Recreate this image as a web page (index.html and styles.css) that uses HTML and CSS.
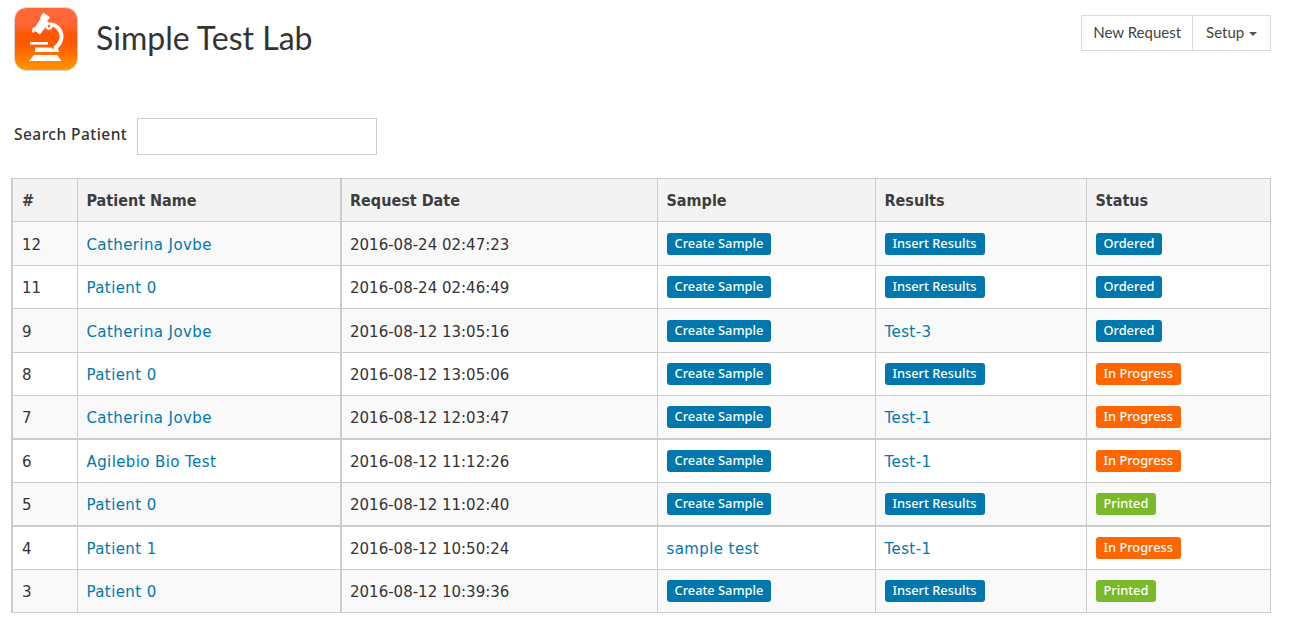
FILE: index.html
```html
<!DOCTYPE html>
<html lang="en">
<head>
<meta charset="utf-8">
<title>Simple Test Lab</title>
<link rel="stylesheet" href="styles.css">
</head>
<body>
<header class="top">
  <div class="brand">
    <svg class="logo" viewBox="0 0 64 64" width="64" height="64" aria-hidden="true">
      <defs>
        <linearGradient id="lg" x1="0" y1="0" x2="0" y2="1">
          <stop offset="0" stop-color="#ff6a3a"/>
          <stop offset="0.3" stop-color="#ff6430"/>
          <stop offset="0.42" stop-color="#ff5500"/>
          <stop offset="0.6" stop-color="#ff5a00"/>
          <stop offset="1" stop-color="#ff9800"/>
        </linearGradient>
      </defs>
      <rect x="0.5" y="0.5" width="63" height="63" rx="12" fill="url(#lg)" stroke="#e0d8d0"/>
      <g fill="#fff">
        <path d="M29 5.5 L36 10 L33 14.5 L35 15.5 L26 27.5 L21 24 L19.5 26 L18 25 L18.5 21 L21 20 L26.5 12 L26 11 Z"/>
        <path fill-rule="evenodd" d="M35 15.5 A3.6 3.6 0 1 1 35 22.7 A3.6 3.6 0 1 1 35 15.5 Z M35 17.8 A1.3 1.3 0 1 0 35 20.4 A1.3 1.3 0 1 0 35 17.8 Z"/>
        <path d="M37 15.5 C44 16 49.5 22 49.5 29.5 C49.5 35 46.5 40 41 43.5 L39.5 39.5 C43 37 45.5 33.5 45.5 29.5 C45.5 24.5 42 20.5 38 19.5 Z"/>
        <rect x="16" y="35" width="18" height="2.6"/>
        <path fill-rule="evenodd" d="M21 40.5 L38 40.5 L39 43 A3 3 0 0 1 44 41 L45 45 L21 45 Z"/>
        <path d="M20 48 L43 48 L47.5 54 L15 54 Z"/>
      </g>
    </svg>
    <h1 class="title">Simple Test Lab</h1>
  </div>
  <nav class="actions">
    <a class="act" href="#">New Request</a>
    <a class="act" href="#">Setup <span class="caret"></span></a>
  </nav>
</header>

<form class="search">
  <label class="search-label" for="q">Search Patient</label>
  <input class="search-input" id="q" type="text">
</form>

<table class="grid">
  <colgroup>
    <col class="c1"><col class="c2"><col class="c3"><col class="c4"><col class="c5"><col class="c6">
  </colgroup>
  <thead>
    <tr><th>#</th><th>Patient Name</th><th>Request Date</th><th>Sample</th><th>Results</th><th>Status</th></tr>
  </thead>
  <tbody>
    <tr><td>12</td><td><a href="#">Catherina Jovbe</a></td><td>2016-08-24 02:47:23</td><td><a class="tag blue" href="#">Create Sample</a></td><td><a class="tag blue" href="#">Insert Results</a></td><td><span class="tag blue">Ordered</span></td></tr>
    <tr><td>11</td><td><a href="#">Patient 0</a></td><td>2016-08-24 02:46:49</td><td><a class="tag blue" href="#">Create Sample</a></td><td><a class="tag blue" href="#">Insert Results</a></td><td><span class="tag blue">Ordered</span></td></tr>
    <tr><td>9</td><td><a href="#">Catherina Jovbe</a></td><td>2016-08-12 13:05:16</td><td><a class="tag blue" href="#">Create Sample</a></td><td><a href="#">Test-3</a></td><td><span class="tag blue">Ordered</span></td></tr>
    <tr><td>8</td><td><a href="#">Patient 0</a></td><td>2016-08-12 13:05:06</td><td><a class="tag blue" href="#">Create Sample</a></td><td><a class="tag blue" href="#">Insert Results</a></td><td><span class="tag orange">In Progress</span></td></tr>
    <tr class="before-thick"><td>7</td><td><a href="#">Catherina Jovbe</a></td><td>2016-08-12 12:03:47</td><td><a class="tag blue" href="#">Create Sample</a></td><td><a href="#">Test-1</a></td><td><span class="tag orange">In Progress</span></td></tr>
    <tr class="thick"><td>6</td><td><a href="#">Agilebio Bio Test</a></td><td>2016-08-12 11:12:26</td><td><a class="tag blue" href="#">Create Sample</a></td><td><a href="#">Test-1</a></td><td><span class="tag orange">In Progress</span></td></tr>
    <tr class="before-thick"><td>5</td><td><a href="#">Patient 0</a></td><td>2016-08-12 11:02:40</td><td><a class="tag blue" href="#">Create Sample</a></td><td><a class="tag blue" href="#">Insert Results</a></td><td><span class="tag green">Printed</span></td></tr>
    <tr class="thick"><td>4</td><td><a href="#">Patient 1</a></td><td>2016-08-12 10:50:24</td><td><a href="#">sample test</a></td><td><a href="#">Test-1</a></td><td><span class="tag orange">In Progress</span></td></tr>
    <tr><td>3</td><td><a href="#">Patient 0</a></td><td>2016-08-12 10:39:36</td><td><a class="tag blue" href="#">Create Sample</a></td><td><a class="tag blue" href="#">Insert Results</a></td><td><span class="tag green">Printed</span></td></tr>
  </tbody>
</table>
</body>
</html>
```
FILE: styles.css
```css
html, body { margin: 0; background: #fff; }
body {
  padding: 7px 30px 0 11px;
  font-family: "DejaVu Sans", "Noto Sans", sans-serif;
  font-size: 15px;
  color: #333;
}
a { color: #0078ae; text-decoration: none; letter-spacing: 0.4px; }

.top { display: flex; justify-content: space-between; align-items: flex-start; height: 111px; }
.brand { display: flex; align-items: flex-start; gap: 18px; padding-left: 3px; }
.logo { display: block; }
.title { margin: 11px 0 0; font-family: Lato, "Noto Sans", sans-serif; font-size: 32px; line-height: 40px; font-weight: 400; color: #333; }

.actions { display: flex; margin-top: 8px; }
.act {
  display: block;
  height: 36px;
  line-height: 33px;
  box-sizing: border-box;
  padding: 0 11px;
  border: 1px solid #d5d9e2;
  color: #444;
  font-family: Lato, "Noto Sans", sans-serif;
  font-size: 15px;
  letter-spacing: 0;
  background: #fff;
}
.act + .act { margin-left: -1px; padding: 0 13px; }
.caret {
  display: inline-block;
  vertical-align: middle;
  margin-left: 1px;
  border-top: 4px solid #555;
  border-left: 4px solid transparent;
  border-right: 4px solid transparent;
}

.search { display: flex; align-items: center; gap: 10px; padding-left: 3px; height: 37px; margin-bottom: 23px; }
.search-label { width: 113px; margin-bottom: 6px; font-family: "Noto Sans", sans-serif; font-size: 15.5px; font-weight: 500; letter-spacing: 0.45px; white-space: nowrap; }
.search-input {
  width: 240px;
  height: 37px;
  box-sizing: border-box;
  border: 1px solid #ccc;
  padding: 0 8px;
  background: #fff;
  outline: 0;
}

.grid {
  table-layout: fixed;
  border-collapse: collapse;
  width: 1258px;
  border-left: 2px solid #ccc;
}
.c1 { width: 65px; }
.c2 { width: 264px; }
.c3 { width: 316px; }
.c4 { width: 218px; }
.c5 { width: 211px; }
.c6 { width: 184px; }
.grid th, .grid td {
  border: 1px solid #ccc;
  padding: 0 9px;
  text-align: left;
  vertical-align: middle;
}
.grid th { height: 42px; background: #f3f3f3; font-size: 16px; font-weight: 700; font-stretch: condensed; color: #3d3d3d; }
.grid td { height: 40px; padding-top: 2px; }
.grid td:nth-child(3), .grid th:nth-child(3) { border-left-width: 2px; padding-left: 8px; }
.grid tbody tr:nth-child(odd) { background: #f9f9f9; }
.grid tbody tr:nth-child(odd) td { height: 41px; }
.grid tbody tr.before-thick td { height: 40px; }
.grid tbody tr.thick td { border-top-width: 2px; height: 40px; }
.grid tbody tr:last-child td { height: 40px; }

.tag {
  display: inline-block;
  height: 22px;
  line-height: 21px;
  margin-top: -2px;
  padding: 0 8px;
  border-radius: 3px;
  font-family: "Noto Sans", sans-serif;
  font-size: 12.8px;
  font-weight: 500;
  letter-spacing: 0;
  color: #fff;
  vertical-align: middle;
}
.blue { background: #0078ae; }
.orange { background: #ff6600; }
.green { background: #7ab929; }
```
